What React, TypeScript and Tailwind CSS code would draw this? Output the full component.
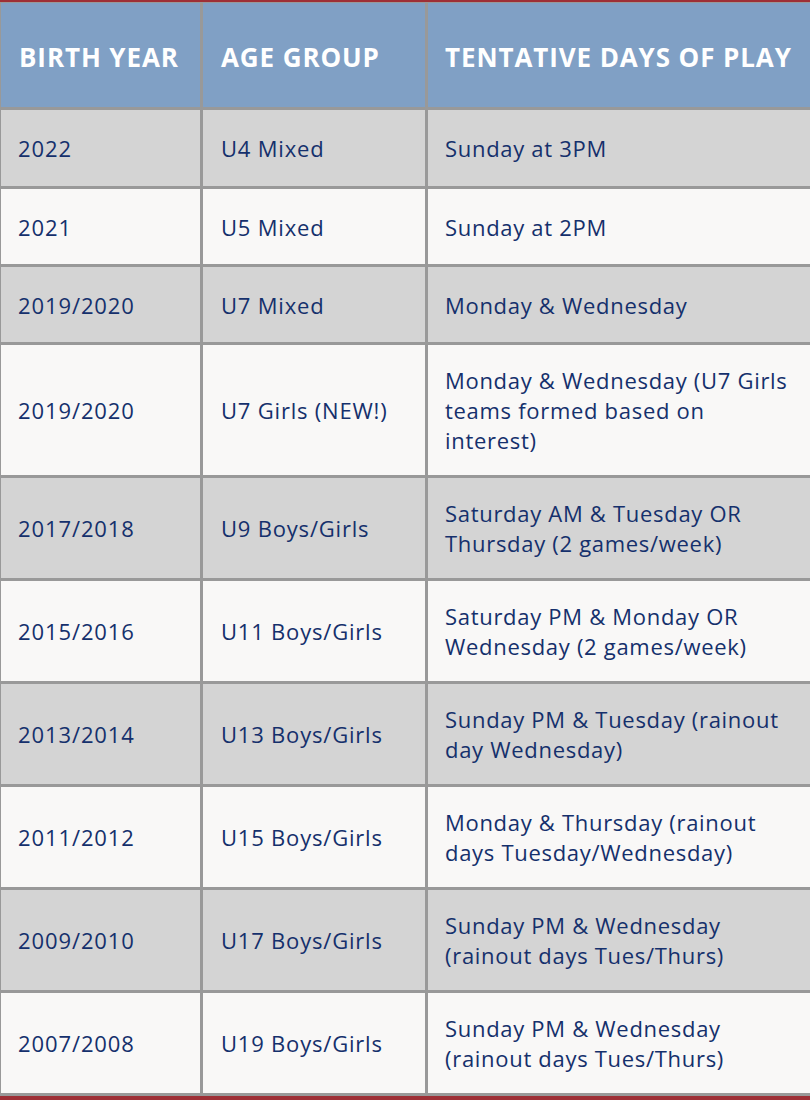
import React from "react";

const rows: { y: string; g: string; d: string[]; h: string; grey: boolean }[] = [
  { y: "2022", g: "U4 Mixed", d: ["Sunday at 3PM"], h: "h-[76px]", grey: true },
  { y: "2021", g: "U5 Mixed", d: ["Sunday at 2PM"], h: "h-[75px]", grey: false },
  { y: "2019/2020", g: "U7 Mixed", d: ["Monday & Wednesday"], h: "h-[75px]", grey: true },
  { y: "2019/2020", g: "U7 Girls (NEW!)", d: ["Monday & Wednesday (U7 Girls", "teams formed based on", "interest)"], h: "h-[130px]", grey: false },
  { y: "2017/2018", g: "U9 Boys/Girls", d: ["Saturday AM & Tuesday OR", "Thursday (2 games/week)"], h: "h-[100px]", grey: true },
  { y: "2015/2016", g: "U11 Boys/Girls", d: ["Saturday PM & Monday OR", "Wednesday (2 games/week)"], h: "h-[100px]", grey: false },
  { y: "2013/2014", g: "U13 Boys/Girls", d: ["Sunday PM & Tuesday (rainout", "day Wednesday)"], h: "h-[100px]", grey: true },
  { y: "2011/2012", g: "U15 Boys/Girls", d: ["Monday & Thursday (rainout", "days Tuesday/Wednesday)"], h: "h-[100px]", grey: false },
  { y: "2009/2010", g: "U17 Boys/Girls", d: ["Sunday PM & Wednesday", "(rainout days Tues/Thurs)"], h: "h-[100px]", grey: true },
  { y: "2007/2008", g: "U19 Boys/Girls", d: ["Sunday PM & Wednesday", "(rainout days Tues/Thurs)"], h: "h-[100px]", grey: false },
];

export default function App() {
  return (
    <div className="w-[810px] h-[1100px] bg-[#9e2f36] pt-[2px] font-['Open_Sans',sans-serif]">
      <div className="flex flex-col gap-[3px] bg-[#999999] pt-[1px] pb-[3px] pl-[1px]">
        <div className="grid grid-cols-[199px_222px_1fr] gap-[3px] h-[104px]">
          <div className="bg-[#80a0c5] flex items-center pl-[18px] pt-[4px] text-white font-bold text-[26px] tracking-[0.9px]">BIRTH YEAR</div>
          <div className="bg-[#80a0c5] flex items-center pl-[18px] pt-[4px] text-white font-bold text-[26px] tracking-[0.9px]">AGE GROUP</div>
          <div className="bg-[#80a0c5] flex items-center pl-[17px] pt-[4px] text-white font-bold text-[26px] tracking-[0.9px] whitespace-nowrap">TENTATIVE DAYS OF PLAY</div>
        </div>
        {rows.map((r, i) => (
          <div key={i} className={`grid grid-cols-[199px_222px_1fr] gap-[3px] ${r.h}`}>
            <div className={`${r.grey ? "bg-[#d4d4d4]" : "bg-[#f9f8f7]"} flex items-center pl-[17px] text-[#15306c] text-[22px] leading-[30px] tracking-[0.9px]`}>{r.y}</div>
            <div className={`${r.grey ? "bg-[#d4d4d4]" : "bg-[#f9f8f7]"} flex items-center pl-[18px] text-[#15306c] text-[22px] leading-[30px] tracking-[0.8px]`}>{r.g}</div>
            <div className={`${r.grey ? "bg-[#d4d4d4]" : "bg-[#f9f8f7]"} flex flex-col justify-center pl-[17px] text-[#15306c] text-[22px] leading-[30px] tracking-[0.7px] whitespace-nowrap`}>
              {r.d.map((l, j) => (
                <span key={j}>{l}</span>
              ))}
            </div>
          </div>
        ))}
      </div>
    </div>
  );
}
